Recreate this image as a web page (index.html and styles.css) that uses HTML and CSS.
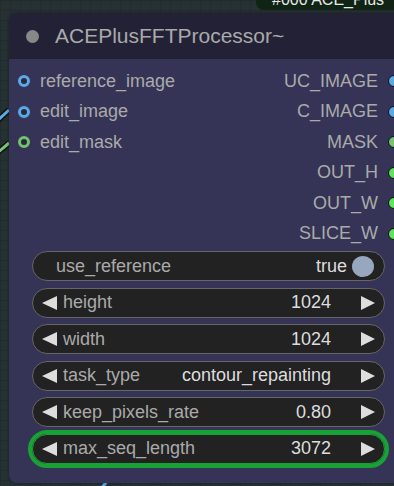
FILE: index.html
```html
<!DOCTYPE html>
<html lang="en">
<head>
  <meta charset="UTF-8" />
  <meta name="viewport" content="width=device-width, initial-scale=1" />
  <title>ACEPlusFFTProcessor</title>
  <link rel="stylesheet" href="styles.css">
</head>
<body>
  <div class="canvas">
    <svg class="wires" width="394" height="486" viewBox="0 0 394 486">
      <path d="M-4 122 L9 110" stroke="#111" stroke-width="6" fill="none" />
      <path d="M-4 122 L9 110" stroke="#5aa9e8" stroke-width="3" fill="none" />
      <path d="M-4 154 L9 143" stroke="#111" stroke-width="6" fill="none" />
      <path d="M-4 154 L9 143" stroke="#7cc47c" stroke-width="3" fill="none" />
      <path d="M100 490 L108 480" stroke="#5aa9e8" stroke-width="3" fill="none" />
    </svg>

    <div class="group-tag">#000 ACE_Plus</div>

    <div class="node">
      <div class="node-title">
        <span class="title-dot"></span>
        <span>ACEPlusFFTProcessor~</span>
      </div>

      <div class="node-body">
        <div class="slots">
          <div class="inputs">
            <div class="slot"><span class="dot ring blue"></span>reference_image</div>
            <div class="slot"><span class="dot ring blue"></span>edit_image</div>
            <div class="slot"><span class="dot ring green"></span>edit_mask</div>
          </div>
          <div class="outputs">
            <div class="slot">UC_IMAGE<span class="dot out blue"></span></div>
            <div class="slot">C_IMAGE<span class="dot out blue"></span></div>
            <div class="slot">MASK<span class="dot out soft-green"></span></div>
            <div class="slot">OUT_H<span class="dot out green"></span></div>
            <div class="slot">OUT_W<span class="dot out green"></span></div>
            <div class="slot">SLICE_W<span class="dot out green"></span></div>
          </div>
        </div>

        <div class="widgets">
          <div class="widget toggle">
            <span class="label">use_reference</span>
            <span class="value">true</span>
            <span class="knob"></span>
          </div>
          <div class="widget">
            <span class="arrow left"></span>
            <span class="label">height</span>
            <span class="value">1024</span>
            <span class="arrow right"></span>
          </div>
          <div class="widget">
            <span class="arrow left"></span>
            <span class="label">width</span>
            <span class="value">1024</span>
            <span class="arrow right"></span>
          </div>
          <div class="widget">
            <span class="arrow left"></span>
            <span class="label">task_type</span>
            <span class="value">contour_repainting</span>
            <span class="arrow right"></span>
          </div>
          <div class="widget">
            <span class="arrow left"></span>
            <span class="label">keep_pixels_rate</span>
            <span class="value">0.80</span>
            <span class="arrow right"></span>
          </div>
          <div class="widget active">
            <span class="arrow left"></span>
            <span class="label">max_seq_length</span>
            <span class="value">3072</span>
            <span class="arrow right"></span>
          </div>
        </div>
      </div>
    </div>
  </div>
</body>
</html>
```

FILE: styles.css
```css
body {
  margin: 0;
  font-family: "Liberation Sans", Arial, sans-serif;
  background: #263133;
  overflow: hidden;
}
.canvas {
  position: relative;
  width: 394px;
  height: 486px;
  overflow: hidden;
  background-color: #263133;
  background-image:
    linear-gradient(#222b2d 1px, transparent 1px),
    linear-gradient(90deg, #222b2d 1px, transparent 1px);
  background-size: 10px 10px;
}
.wires {
  position: absolute;
  left: 0;
  top: 0;
}
.group-tag {
  position: absolute;
  left: 256px;
  top: -8px;
  width: 150px;
  height: 18px;
  background: #0f2414;
  border-radius: 0 0 0 8px;
  color: #e8e8e8;
  font-size: 16px;
  line-height: 15px;
  padding-left: 16px;
  box-sizing: border-box;
  white-space: nowrap;
}
.node {
  position: absolute;
  left: 9px;
  top: 13px;
  width: 399px;
  height: 470px;
  background: #353456;
  border-radius: 8px;
  overflow: hidden;
  box-shadow: 0 0 3px rgba(0, 0, 0, 0.4);
}
.node-title {
  height: 46px;
  background: #232136;
  display: flex;
  align-items: center;
  color: #aaa;
  font-size: 21px;
  padding-left: 17px;
}
.title-dot {
  width: 13px;
  height: 13px;
  border-radius: 50%;
  background: #888;
  margin-right: 16px;
}
.node-body {
  padding-top: 7px;
}
.slots {
  display: flex;
  justify-content: space-between;
  color: #aaa;
  font-size: 18px;
}
.slot {
  height: 30.5px;
  display: flex;
  align-items: center;
}
.outputs .slot {
  justify-content: flex-end;
}
.dot {
  display: inline-block;
  box-sizing: border-box;
  border-radius: 50%;
}
.dot.ring {
  width: 12px;
  height: 12px;
  border: 3.5px solid #5aa9e8;
  background: #2a2940;
  margin-left: 9px;
  margin-right: 10px;
}
.dot.ring.green {
  border-color: #72c46c;
}
.dot.out {
  width: 12px;
  height: 12px;
  border: 1px solid #111;
  background: #5aa9e8;
  margin-left: 10px;
  margin-right: 8px;
}
.dot.out.soft-green {
  background: #74c470;
}
.dot.out.green {
  background: #5ee45e;
}
.widgets {
  margin-top: 2px;
  padding-left: 23px;
  width: 353px;
  display: flex;
  flex-direction: column;
  gap: 6.6px;
}
.widget {
  height: 30px;
  box-sizing: border-box;
  border: 1px solid #666;
  border-radius: 15px;
  background: #222;
  display: flex;
  align-items: center;
  padding: 0 9px 0 9px;
  font-size: 18px;
  color: #aaa;
}
.widget .label {
  margin-left: 6px;
}
.widget .value {
  margin-left: auto;
  color: #ddd;
}
.arrow {
  width: 0;
  height: 0;
  border-top: 7.5px solid transparent;
  border-bottom: 7.5px solid transparent;
}
.arrow.left {
  border-right: 15px solid #ddd;
}
.arrow.right {
  border-left: 14px solid #ddd;
  margin-left: 30px;
}
.widget.toggle {
  padding-left: 17px;
  padding-right: 10px;
}
.knob {
  width: 22px;
  height: 21px;
  border-radius: 50%;
  background: #97a7bd;
  margin-left: 5px;
}
.widget.active {
  outline: 4px solid #18a134;
  border-color: #18a134;
}
```
